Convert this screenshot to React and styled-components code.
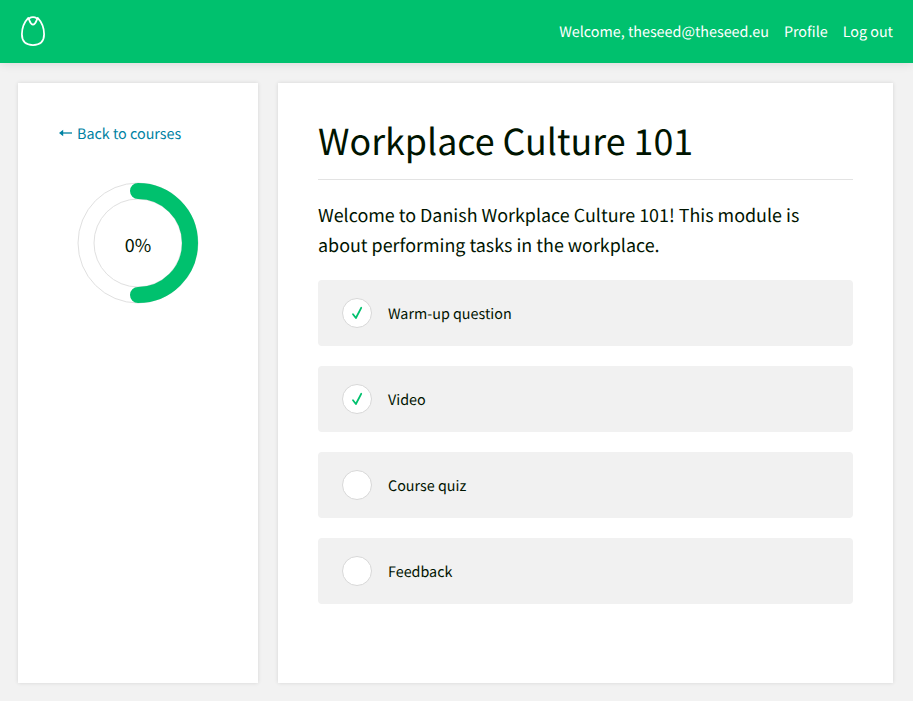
import React from "react";
import styled, { createGlobalStyle } from "styled-components";

const GlobalStyle = createGlobalStyle`
  *, *::before, *::after { box-sizing: border-box; }
  body {
    margin: 0;
    background: #f2f2f2;
    color: #001400;
    font-family: "Noto Sans CJK SC", "Noto Sans", sans-serif;
    font-size: 14.33px;
    line-height: 22px;
    text-rendering: geometricPrecision;
  }
`;

const Page = styled.div`
  height: 701px;
  display: flex;
  flex-direction: column;
  overflow: hidden;
`;

const Header = styled.header`
  flex: none;
  height: 63px;
  padding: 0 20px;
  display: flex;
  align-items: center;
  justify-content: space-between;
  background: #00c16e;
  box-shadow: 0 0 10px rgba(0, 0, 0, 0.12);
`;

const Logo = styled.svg`
  display: block;
  width: 26px;
  height: 32px;
`;

const Nav = styled.nav`
  display: flex;
  gap: 15px;
`;

const NavItem = styled.span`
  color: #fff;
  white-space: nowrap;
`;

const Content = styled.div`
  display: flex;
  gap: 20px;
  height: 600px;
  margin: 20px 20px 0 18px;
`;

const Panel = styled.div`
  background: #fff;
  box-shadow: 0 0 4px rgba(0, 0, 0, 0.12);
`;

const Sidebar = styled(Panel)`
  flex: none;
  width: 240px;
  padding: 40px 40px 0;
`;

const Main = styled(Panel)`
  flex: 1;
  padding: 33px 40px 0;
`;

const BackLink = styled.a`
  display: flex;
  align-items: center;
  gap: 5px;
  height: 22px;
  padding-left: 1px;
  color: #0082a3;
  white-space: nowrap;
`;

const Arrow = styled.svg`
  width: 13px;
  height: 8px;
  margin-bottom: 2px;
`;

const Progress = styled.div`
  width: 122px;
  height: 122px;
  margin: 37px 0 0 19px;
  display: grid;
  place-items: center;
  & > * { grid-area: 1 / 1; }
`;

const Percent = styled.span`
  font-size: 17.9px;
  line-height: 26px;
  padding-top: 4px;
`;

const Title = styled.h1`
  margin: 0;
  height: 64px;
  padding-bottom: 15px;
  border-bottom: 1px solid #e3e3e3;
  font-size: 35.82px;
  line-height: 48px;
  font-weight: 400;
`;

const Intro = styled.p`
  margin: 20px 0;
  padding-right: 20px;
  font-size: 17.9px;
  line-height: 30px;
`;

const Tasks = styled.ul`
  list-style: none;
  margin: 0;
  padding: 0;
  display: flex;
  flex-direction: column;
  gap: 20px;
`;

const Task = styled.li`
  display: flex;
  align-items: center;
  gap: 16px;
  height: 66px;
  padding: 0 24px;
  border-radius: 4px;
  background: #f1f1f1;
`;

const TaskLabel = styled.span`
  padding-top: 2px;
`;

const Status = styled.span`
  display: flex;
  align-items: center;
  justify-content: center;
  width: 30px;
  height: 30px;
  border: 1px solid #d8d8d8;
  border-radius: 50%;
  background: #fff;
`;

const TASKS = [
  { label: "Warm-up question", done: true },
  { label: "Video", done: true },
  { label: "Course quiz", done: false },
  { label: "Feedback", done: false },
];

function Check() {
  return (
    <svg width="12" height="14" viewBox="0 0 12 14" fill="none">
      <path d="M2 8.3 L4.9 12 L10.2 1.8" stroke="#00c16e" strokeWidth="1.8" strokeLinecap="round" strokeLinejoin="round" />
    </svg>
  );
}

export default function App() {
  return (
    <Page>
      <GlobalStyle />
      <Header>
        <Logo viewBox="0 0 26 32" fill="none" stroke="#fff" strokeWidth="1.75" strokeLinejoin="round" strokeLinecap="round">
          <path d="M8.3 1.9 C4.4 6 1.9 12.2 1.9 18.3 C1.9 25.6 6 29 13 29 C20 29 24.1 25.6 24.1 18.3 C24.1 12.2 21.6 6 17.7 1.9 C16.3 4.3 15.8 8.6 13 8.6 C10.2 8.6 9.7 4.3 8.3 1.9 Z" />
          <path d="M9 2.4 C11.2 1.1 14.8 1.1 17 2.4" />
        </Logo>
        <Nav>
          <NavItem>Welcome, theseed@theseed.eu</NavItem>
          <NavItem>Profile</NavItem>
          <NavItem>Log out</NavItem>
        </Nav>
      </Header>
      <Content>
        <Sidebar>
          <BackLink>
            <Arrow viewBox="0 0 13 8">
              <path d="M0 4 L4.2 0.8 V7.2 Z" fill="#0082a3" />
              <path d="M3 4 H13" stroke="#0082a3" strokeWidth="1.3" />
            </Arrow>
            Back to courses
          </BackLink>
          <Progress>
            <svg width="122" height="122" viewBox="0 0 122 122" fill="none">
              <circle cx="61" cy="61" r="60" stroke="#e0e0e0" />
              <circle cx="61" cy="61" r="44" stroke="#e0e0e0" />
              <path d="M61 9 A52 52 0 0 1 61 113" stroke="#00c16e" strokeWidth="16" strokeLinecap="round" />
            </svg>
            <Percent>0%</Percent>
          </Progress>
        </Sidebar>
        <Main>
          <Title>Workplace Culture 101</Title>
          <Intro>
            Welcome to Danish Workplace Culture 101! This module is about performing tasks in the workplace.
          </Intro>
          <Tasks>
            {TASKS.map((task) => (
              <Task key={task.label}>
                <Status>{task.done && <Check />}</Status>
                <TaskLabel>{task.label}</TaskLabel>
              </Task>
            ))}
          </Tasks>
        </Main>
      </Content>
    </Page>
  );
}
